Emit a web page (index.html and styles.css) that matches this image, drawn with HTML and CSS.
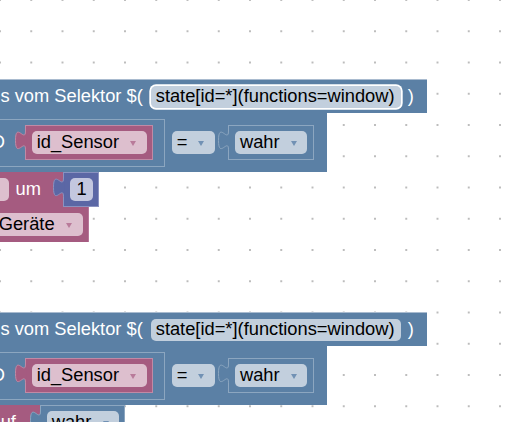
FILE: index.html
```html
<!DOCTYPE html>
<html lang="de">
<head>
<meta charset="utf-8">
<title>Blockly</title>
<link rel="stylesheet" href="styles.css">
</head>
<body>
<div class="workspace">

  <div class="stack stack-a">
    <div class="hat">
      <span class="label hat-text">s vom Selektor $(</span>
      <span class="field field-blue selector selected">state[id=*](functions=window)</span>
      <span class="label paren">)</span>
    </div>
    <div class="compare">
      <div class="getval">
        <span class="label idtail">ID</span>
        <div class="vblock pink sensor">
          <svg class="tab" width="12" height="20" viewBox="0 0 12 20"><path class="tab-fill" d="M10.5,0 C10.5,12.5 0.5,-10 0.5,9.375 C0.5,28.75 10.5,6.25 10.5,18.75 L11.5,18.75 L11.5,0 Z"/><path class="tab-line" d="M10.5,0 C10.5,12.5 0.5,-10 0.5,9.375 C0.5,28.75 10.5,6.25 10.5,18.75"/></svg>
          <span class="field field-pink dd">id_Sensor</span>
        </div>
      </div>
      <span class="field field-blue dd eq">=</span>
      <div class="vblock blue wahr">
        <svg class="tab" width="12" height="20" viewBox="0 0 12 20"><path class="tab-fill" d="M10.5,0 C10.5,12.5 0.5,-10 0.5,9.375 C0.5,28.75 10.5,6.25 10.5,18.75 L11.5,18.75 L11.5,0 Z"/><path class="tab-line" d="M10.5,0 C10.5,12.5 0.5,-10 0.5,9.375 C0.5,28.75 10.5,6.25 10.5,18.75"/></svg>
        <span class="field field-blue dd">wahr</span>
      </div>
    </div>
    <div class="row">
      <div class="sblock um-block">
        <span class="field field-pink stub"></span>
        <span class="label um">um</span>
      </div>
      <div class="vblock violet num">
        <svg class="tab" width="12" height="20" viewBox="0 0 12 20"><path class="tab-fill" d="M10.5,0 C10.5,12.5 0.5,-10 0.5,9.375 C0.5,28.75 10.5,6.25 10.5,18.75 L11.5,18.75 L11.5,0 Z"/><path class="tab-line" d="M10.5,0 C10.5,12.5 0.5,-10 0.5,9.375 C0.5,28.75 10.5,6.25 10.5,18.75"/></svg>
        <span class="field field-violet numfield">1</span>
      </div>
    </div>
    <div class="sblock geraete">
      <span class="field field-pink dd ger">Geräte</span>
    </div>
  </div>

  <div class="stack stack-b">
    <div class="hat">
      <span class="label hat-text">s vom Selektor $(</span>
      <span class="field field-blue selector">state[id=*](functions=window)</span>
      <span class="label paren">)</span>
    </div>
    <div class="compare">
      <div class="getval">
        <span class="label idtail">ID</span>
        <div class="vblock pink sensor">
          <svg class="tab" width="12" height="20" viewBox="0 0 12 20"><path class="tab-fill" d="M10.5,0 C10.5,12.5 0.5,-10 0.5,9.375 C0.5,28.75 10.5,6.25 10.5,18.75 L11.5,18.75 L11.5,0 Z"/><path class="tab-line" d="M10.5,0 C10.5,12.5 0.5,-10 0.5,9.375 C0.5,28.75 10.5,6.25 10.5,18.75"/></svg>
          <span class="field field-pink dd">id_Sensor</span>
        </div>
      </div>
      <span class="field field-blue dd eq">=</span>
      <div class="vblock blue wahr">
        <svg class="tab" width="12" height="20" viewBox="0 0 12 20"><path class="tab-fill" d="M10.5,0 C10.5,12.5 0.5,-10 0.5,9.375 C0.5,28.75 10.5,6.25 10.5,18.75 L11.5,18.75 L11.5,0 Z"/><path class="tab-line" d="M10.5,0 C10.5,12.5 0.5,-10 0.5,9.375 C0.5,28.75 10.5,6.25 10.5,18.75"/></svg>
        <span class="field field-blue dd">wahr</span>
      </div>
    </div>
    <div class="row">
      <div class="sblock auf-block">
        <span class="label auf">auf</span>
      </div>
      <div class="vblock blue wahr2">
        <svg class="tab" width="12" height="20" viewBox="0 0 12 20"><path class="tab-fill" d="M10.5,0 C10.5,12.5 0.5,-10 0.5,9.375 C0.5,28.75 10.5,6.25 10.5,18.75 L11.5,18.75 L11.5,0 Z"/><path class="tab-line" d="M10.5,0 C10.5,12.5 0.5,-10 0.5,9.375 C0.5,28.75 10.5,6.25 10.5,18.75"/></svg>
        <span class="field field-blue dd">wahr</span>
      </div>
    </div>
  </div>

</div>
</body>
</html>
```

FILE: styles.css
```css
* { box-sizing: border-box; }
html, body { margin: 0; padding: 0; }
body { width: 512px; height: 422px; overflow: hidden; background: #fff; }

.workspace {
  position: relative;
  width: 512px;
  height: 422px;
  overflow: hidden;
  background-color: #fff;
  background-image: radial-gradient(circle, #bcbcbc 0, #bcbcbc 0.8px, rgba(188,188,188,0) 1.3px);
  background-size: 31.25px 31.25px;
  background-position: -15.625px -15.625px;
  font-family: "Liberation Sans", Arial, sans-serif;
  font-size: 18.3px;
  color: #fff;
}

.stack {
  position: absolute;
  left: 0;
  display: flex;
  flex-direction: column;
  align-items: flex-start;
}
.stack-a { top: 79px; }
.stack-b { top: 312px; }

.label { color: #fff; white-space: nowrap; line-height: 1; flex: none; }

/* top row */
.hat {
  display: flex;
  align-items: center;
  width: 427px;
  height: 34px;
  background: #5b80a5;
  border-top: 1px solid #a9bbcf;
}
.hat-text { margin-left: 0.5px; }
.paren { margin-left: 7px; }

/* fields */
.field {
  display: flex;
  align-items: center;
  height: 23px;
  border-radius: 5px;
  color: #000;
  white-space: nowrap;
  line-height: 1;
  padding-left: 5px;
  flex: none;
}
.field-blue { background: #c2cfdd; }
.field-pink { background: #ddbfce; }
.field-violet { background: #c3c7df; }

.selector { width: 250px; height: 22px; margin-left: 8px; }
.selected { box-shadow: 0 0 0 1.7px #fff; }

.dd { justify-content: space-between; padding-right: 10.5px; }
.dd::after {
  content: "";
  width: 0;
  height: 0;
  border-left: 3.5px solid transparent;
  border-right: 3.5px solid transparent;
  border-top: 5px solid #7191b4;
  margin-top: 2px;
}
.field-pink.dd::after { border-top-color: #b97b9a; }

/* compare row */
.compare {
  display: flex;
  align-items: center;
  width: 327px;
  height: 59px;
  background: #5b80a5;
}
.getval {
  display: flex;
  align-items: center;
  flex: none;
  width: 165px;
  height: 48px;
  border: 1px solid #8ca6c0;
  border-left: 0;
}
.idtail { width: 30px; margin-left: -25px; text-align: right; }

.vblock {
  position: relative;
  display: flex;
  align-items: center;
  flex: none;
  border: 1px solid;
}
.vblock.pink { background: #a55b80; border-color: #c08aa5; }
.vblock.blue { background: #5b80a5; border-color: #8ca6c0; }
.vblock.violet { background: #5b67a5; border-color: #8a92c0; }

.tab { position: absolute; left: -11px; top: 5.25px; overflow: visible; }
.tab-line { fill: none; stroke-width: 1; }
.pink .tab-fill { fill: #a55b80; }
.pink .tab-line { stroke: #c08aa5; }
.blue .tab-fill { fill: #5b80a5; }
.blue .tab-line { stroke: #8ca6c0; }
.violet .tab-fill { fill: #5b67a5; }
.violet .tab-line { stroke: #8a92c0; }

.sensor { margin-left: 20px; width: 128px; height: 35px; }
.sensor .field { margin-left: 5.7px; width: 115px; }

.eq { margin-left: 6.7px; width: 43.3px; }

.wahr { margin-left: 13.3px; width: 86px; height: 35px; }
.wahr .field { margin-left: 5.7px; width: 72.3px; }

/* statement rows */
.row { display: flex; align-items: flex-start; }
.sblock {
  display: flex;
  align-items: center;
  flex: none;
  background: #a55b80;
}
.um-block { width: 63px; height: 34.5px; }
.stub { width: 29.3px; margin-left: -20px; }
.um { margin-left: 6.2px; }

.num { width: 36.3px; height: 34.5px; }
.numfield { margin-left: 6.4px; width: 22.6px; justify-content: center; padding-left: 0; }

.geraete { width: 88.7px; height: 35.5px; border-right: 1px solid #b7769a; }
.ger { margin-left: -6.3px; width: 89px; }

.auf-block { width: 40px; height: 35px; }
.auf { margin-left: -9.5px; }

.wahr2 { width: 85.3px; height: 35px; border-color: #5b80a5; }
.wahr2 .field { margin-left: 5.7px; width: 72.6px; }
```
